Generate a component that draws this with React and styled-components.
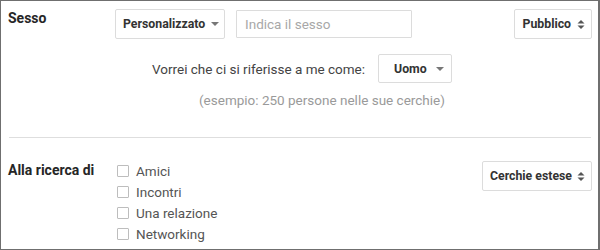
import React from "react";
import styled, { createGlobalStyle } from "styled-components";

const Global = createGlobalStyle`
  html, body { margin: 0; padding: 0; background: #fff; }
  body { font-family: Roboto, "Liberation Sans", Arial, sans-serif; }
`;

const Frame = styled.div`
  box-sizing: border-box;
  width: 600px;
  height: 250px;
  border: 1px solid #6f6f6f;
  border-right-width: 2px;
  padding: 8px 6px 0 7px;
  background: #fff;
  overflow: hidden;
`;

const Section = styled.div`
  display: grid;
  grid-template-columns: 107px 1fr auto;
  align-items: start;
  padding-top: ${(p) => p.$top || 0}px;
  padding-bottom: ${(p) => p.$bottom || 0}px;
`;

const Label = styled.div`
  font-size: 14px;
  font-weight: 700;
  color: #262626;
  line-height: ${(p) => p.$lh || 18}px;
`;

const Column = styled.div`
  display: flex;
  flex-direction: column;
`;

const Row = styled.div`
  display: flex;
  align-items: center;
  gap: ${(p) => p.$gap || 11}px;
  margin-top: ${(p) => p.$top || 0}px;
  padding-left: ${(p) => p.$indent || 0}px;
`;

const Select = styled.div`
  box-sizing: border-box;
  display: flex;
  align-items: center;
  justify-content: space-between;
  gap: ${(p) => p.$gap || 6}px;
  height: ${(p) => p.$h || 30}px;
  min-width: ${(p) => p.$w || 0}px;
  padding: 0 ${(p) => p.$pr || 6}px 0 ${(p) => p.$pl || 7}px;
  margin-top: ${(p) => p.$top || 0}px;
  border: 1px solid #dcdcdc;
  border-radius: 2px;
  background: #fff;
  font-size: 12.3px;
  font-weight: 700;
  color: #333;
  white-space: nowrap;
`;

const Input = styled.div`
  box-sizing: border-box;
  width: 176px;
  height: 28px;
  display: flex;
  align-items: center;
  padding-left: 8px;
  border: 1px solid #dcdcdc;
  border-radius: 1px;
  font-size: 13.5px;
  color: #a8a8a8;
`;

const Text = styled.div`
  font-size: 13.5px;
  line-height: 20px;
  color: ${(p) => (p.$muted ? "#9a9a9a" : "#444")};
  white-space: nowrap;
`;

const Divider = styled.div`
  height: 1px;
  background: #dedede;
  margin: 0 1px;
`;

const CheckList = styled.div`
  display: flex;
  flex-direction: column;
  padding-left: 2px;
`;

const CheckRow = styled.label`
  display: flex;
  align-items: center;
  gap: 7px;
  height: 21px;
  font-size: 13.5px;
  color: #555;
`;

const Box = styled.span`
  box-sizing: border-box;
  width: 12px;
  height: 12px;
  border: 1px solid #bdbdbd;
  border-radius: 1px;
  background: #fff;
`;

const Caret = ({ both }) =>
  both ? (
    <svg width="8" height="11" viewBox="0 0 8 11">
      <path d="M0.5 4.5 L4 1 L7.5 4.5 Z" fill="#555" />
      <path d="M0.5 6.5 L4 10 L7.5 6.5 Z" fill="#555" />
    </svg>
  ) : (
    <svg width="8" height="4" viewBox="0 0 8 4">
      <path d="M0 0 L8 0 L4 4 Z" fill="#777" />
    </svg>
  );

export default function App() {
  return (
    <>
      <Global />
      <Frame>
        <Section $bottom={27}>
          <Label>Sesso</Label>
          <Column>
            <Row>
              <Select $w={110} $gap={5} $pr={5}>
                Personalizzato <Caret />
              </Select>
              <Input>Indica il sesso</Input>
            </Row>
            <Row $top={15} $indent={37} $gap={13}>
              <Text>Vorrei che ci si riferisse a me come:</Text>
              <Select $w={74} $h={29} $pl={15} $pr={7}>
                Uomo <Caret />
              </Select>
            </Row>
            <Row $top={7} $indent={84}>
              <Text $muted>(esempio: 250 persone nelle sue cerchie)</Text>
            </Row>
          </Column>
          <Select>
            Pubblico <Caret both />
          </Select>
        </Section>
        <Divider />
        <Section $top={22}>
          <Label $lh={21}>Alla ricerca di</Label>
          <CheckList>
            {["Amici", "Incontri", "Una relazione", "Networking"].map((t) => (
              <CheckRow key={t}>
                <Box />
                {t}
              </CheckRow>
            ))}
          </CheckList>
          <Select $top={1} $pl={7} $gap={5}>
            Cerchie estese <Caret both />
          </Select>
        </Section>
      </Frame>
    </>
  );
}
